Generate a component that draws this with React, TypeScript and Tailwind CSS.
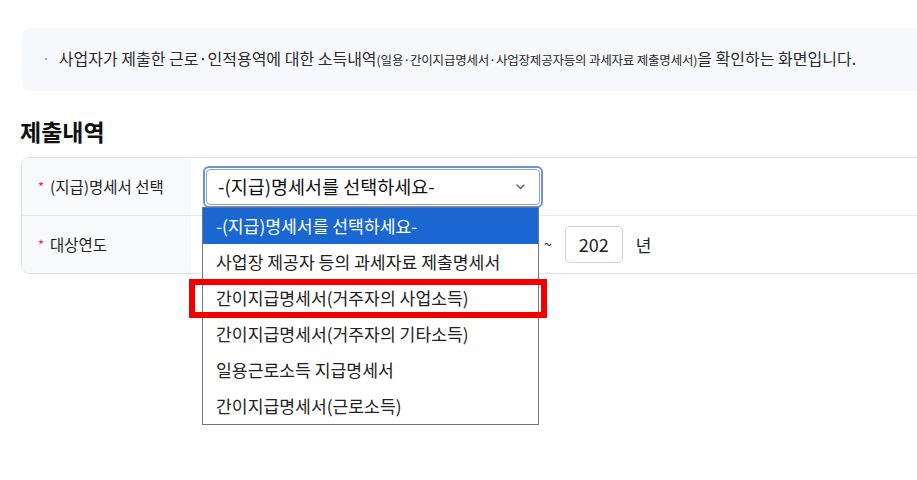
const KR = { fontFamily: '"Noto Sans CJK KR", "Noto Sans", sans-serif' };

const options = [
  '-(지급)명세서를 선택하세요-',
  '사업장 제공자 등의 과세자료 제출명세서',
  '간이지급명세서(거주자의 사업소득)',
  '간이지급명세서(거주자의 기타소득)',
  '일용근로소득 지급명세서',
  '간이지급명세서(근로소득)',
];

function Label({ text }: { text: string }) {
  return (
    <div className="w-[169px] shrink-0 self-stretch flex items-center pl-[16px] bg-[#f9fafc] text-[15.5px] text-[#1e1e1e]">
      <span className="text-[#e0226b] text-[13px] mr-[6px]">*</span>
      {text}
    </div>
  );
}

export default function App() {
  return (
    <div className="relative w-[917px] h-[480px] overflow-hidden bg-white" style={KR}>
      {/* 안내 박스 */}
      <div className="ml-[22px] mt-[28px] w-[920px] h-[63px] rounded-lg bg-[#f7f8fb] flex items-center pb-[3px] pl-[20px] text-[16px] text-[#2a2a2a]">
        <span className="text-[#999] mr-[9px] text-[14px]">·</span>
        <span>
          사업자가 제출한 근로·인적용역에 대한 소득내역
          <span className="text-[12.5px] tracking-[-0.2px]">(일용·간이지급명세서·사업장제공자등의 과세자료 제출명세서)</span>
          을 확인하는 화면입니다.
        </span>
      </div>

      {/* 제출내역 */}
      <h2 className="ml-[20px] mt-[25px] text-[23px] font-bold text-[#111] leading-[30px]">제출내역</h2>

      <div className="ml-[21px] mt-[11px] w-[910px] border border-[#dcdfe6] rounded-lg overflow-hidden">
        <div className="flex items-center h-[58px] border-b border-[#e4e7ec]">
          <Label text="(지급)명세서 선택" />
          <div className="pl-[12px] flex items-center">
            <div className="w-[340px] h-[42px] rounded-[6px] border-2 border-[#6d92d6] p-[1px]">
              <div className="h-full rounded-[4px] border border-[#8aa3cf] flex items-center justify-between pl-[11px] pr-[14px] text-[18.5px] text-[#111]">
                <span>-(지급)명세서를 선택하세요-</span>
                <svg width="9" height="6" viewBox="0 0 9 6" fill="none">
                  <path d="M1 1l3.5 3.5L8 1" stroke="#555" strokeWidth="1.2" strokeLinecap="round" strokeLinejoin="round" />
                </svg>
              </div>
            </div>
          </div>
        </div>
        <div className="flex items-center h-[57px]">
          <Label text="대상연도" />
          <div className="pl-[12px] flex items-center text-[18px] text-[#222]">
            <div className="w-[332px] h-[37px]" />
            <span className="ml-[9px] text-[14px]">~</span>
            <div className="ml-[13px] w-[58px] h-[37px] rounded-[5px] border border-[#cfd3da] flex items-center justify-center">202</div>
            <span className="ml-[13px] text-[17px]">년</span>
          </div>
        </div>
      </div>

      {/* 펼쳐진 드롭다운 */}
      <ul className="absolute left-[202px] top-[207px] w-[337px] bg-white border border-[#767676] text-[17.2px] text-[#222]">
        {options.map((o, i) => (
          <li
            key={o}
            className={`h-[36px] flex items-center pl-[13px] ${i === 0 ? 'bg-[#1a67d2] text-white' : ''}`}
          >
            {o}
          </li>
        ))}
      </ul>

      {/* 강조 표시 */}
      <div className="absolute left-[189px] top-[279px] w-[358px] h-[39px] border-[6px] border-[#f20000]" />
    </div>
  );
}
